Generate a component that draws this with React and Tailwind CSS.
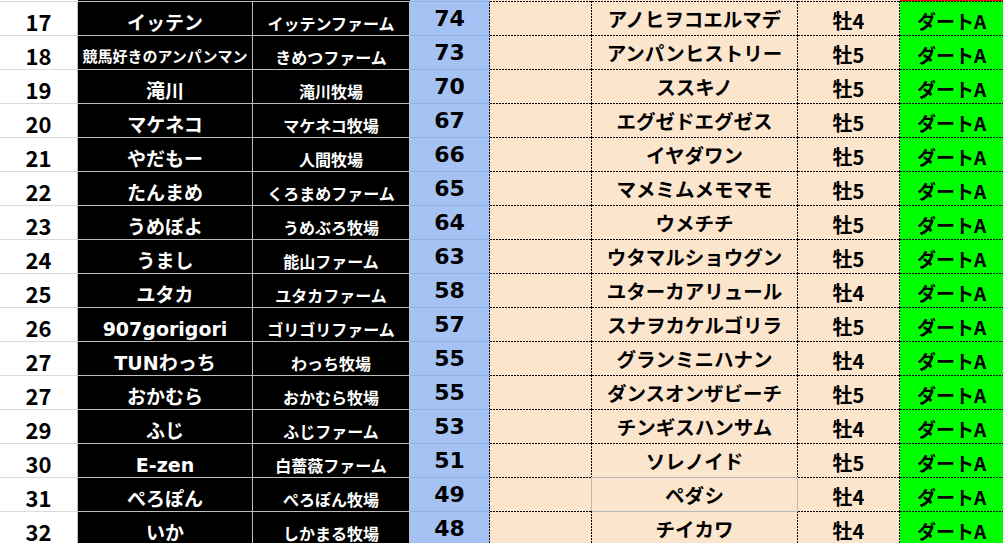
import React from "react";

const rows = [
  ["17", "イッテン", "イッテンファーム", "74", "アノヒヲコエルマデ", "牡4"],
  ["18", "競馬好きのアンパンマン", "きめつファーム", "73", "アンパンヒストリー", "牡5", true],
  ["19", "滝川", "滝川牧場", "70", "ススキノ", "牡5"],
  ["20", "マケネコ", "マケネコ牧場", "67", "エグゼドエグゼス", "牡5"],
  ["21", "やだもー", "人間牧場", "66", "イヤダワン", "牡5"],
  ["22", "たんまめ", "くろまめファーム", "65", "マメミムメモマモ", "牡5"],
  ["23", "うめぼよ", "うめぶろ牧場", "64", "ウメチチ", "牡5"],
  ["24", "うまし", "能山ファーム", "63", "ウタマルショウグン", "牡5"],
  ["25", "ユタカ", "ユタカファーム", "58", "ユターカアリュール", "牡4"],
  ["26", "907gorigori", "ゴリゴリファーム", "57", "スナヲカケルゴリラ", "牡5"],
  ["27", "TUNわっち", "わっち牧場", "55", "グランミニハナン", "牡4"],
  ["27", "おかむら", "おかむら牧場", "55", "ダンスオンザビーチ", "牡5"],
  ["29", "ふじ", "ふじファーム", "53", "チンギスハンサム", "牡4"],
  ["30", "E-zen", "白薔薇ファーム", "51", "ソレノイド", "牡5"],
  ["31", "ぺろぽん", "ぺろぽん牧場", "49", "ペダシ", "牡4"],
  ["32", "いか", "しかまる牧場", "48", "チイカワ", "牡4"],
];

const jp = "font-['Noto_Sans_CJK_JP',sans-serif]";
const mixed = "font-['DejaVu_Sans','Noto_Sans_CJK_JP',sans-serif]";

// dashed top + right lines drawn as repeating gradients (Excel-like 2px dash / 1px gap)
const dashTR =
  "bg-[image:repeating-linear-gradient(90deg,#000_0_2px,transparent_2px_3px),repeating-linear-gradient(180deg,#000_0_2px,transparent_2px_3px)] bg-[length:100%_1px,1px_100%] bg-[position:0_0,100%_0] bg-no-repeat bg-origin-border border-t border-r border-transparent";
const dashT =
  "bg-[image:repeating-linear-gradient(90deg,#000_0_2px,transparent_2px_3px)] bg-[length:100%_1px] bg-[position:0_0] bg-no-repeat bg-origin-border border-t border-transparent";
const dashR =
  "bg-[image:repeating-linear-gradient(180deg,#000_0_2px,transparent_2px_3px)] bg-[length:1px_100%] bg-[position:100%_0] bg-no-repeat bg-origin-border border-r border-r-transparent";
const dashTgrayR =
  "bg-[image:repeating-linear-gradient(90deg,#000_0_2px,transparent_2px_3px)] bg-[length:100%_1px] bg-[position:0_0] bg-no-repeat bg-origin-border border-t border-t-transparent border-r border-r-[#b7b7b7]";
const grayTdashR =
  "bg-[image:repeating-linear-gradient(180deg,#000_0_2px,transparent_2px_3px)] bg-[length:1px_100%] bg-[position:100%_0] bg-no-repeat bg-origin-border border-t border-t-[#b7b7b7] border-r border-r-transparent";

function Row({ r, idx }) {
  const [no, owner, farm, pt, horse, sex, small] = r;
  const ownerSize = small ? "text-[15px]" : "text-[19px]";
  let eCls = dashTR;
  let fCls = dashTR;
  if (idx === 14) {
    eCls = dashTgrayR;
    fCls = "border-t border-r border-[#b7b7b7]";
  } else if (idx === 15) {
    fCls = grayTdashR;
  }
  return (
    <div className="flex h-[34px]">
      <div className={`w-[78px] shrink-0 bg-white border-t border-r border-t-[#dadada] border-r-[#bdbdbd] flex items-center justify-center pt-[4px] ${jp} font-bold text-[22px] text-black leading-none`}>
        {no}
      </div>
      <div className={`w-[175px] shrink-0 bg-black border-t border-r border-[#bdbdbd] flex items-center justify-center pt-[9px] ${mixed} font-bold ${ownerSize} text-white leading-none whitespace-nowrap`}>
        {owner}
      </div>
      <div className={`w-[157px] shrink-0 bg-black border-t border-r border-[#bdbdbd] flex items-center justify-center pt-[8px] ${jp} font-bold text-[16px] text-white leading-none whitespace-nowrap`}>
        {farm}
      </div>
      <div className={`w-[80px] shrink-0 bg-[#a4c2f4] ${dashR} border-t border-t-[#92b0e4] flex items-center justify-center pt-[1px] font-['DejaVu_Sans',sans-serif] font-bold text-[22px] text-black leading-none`}>
        {pt}
      </div>
      <div className={`w-[102px] shrink-0 bg-[#fce5cd] ${eCls}`}></div>
      <div className={`w-[206px] shrink-0 bg-[#fce5cd] ${fCls} flex items-center justify-center pt-[1px] ${jp} font-bold text-[19.5px] text-black leading-none whitespace-nowrap`}>
        {horse}
      </div>
      <div className={`w-[102px] shrink-0 bg-[#fce5cd] ${dashTR} flex items-center justify-center pt-[4px] ${jp} font-bold text-[20px] text-black leading-none`}>
        {sex}
      </div>
      <div className={`w-[103px] shrink-0 bg-[#00ff00] ${dashT} flex items-center justify-center pt-[3px] ${jp} font-bold text-[19px] text-black leading-none`}>
        ダートA
      </div>
    </div>
  );
}

export default function App() {
  return (
    <div className="w-[1003px] h-[543px] overflow-hidden bg-white">
      <div className="flex h-[1px]">
        <div className="w-[78px] bg-white"></div>
        <div className="w-[332px] bg-black"></div>
        <div className="w-[80px] bg-[#a4c2f4]"></div>
        <div className="w-[410px] bg-[#fce5cd]"></div>
        <div className="w-[103px] bg-[#ff0000]"></div>
      </div>
      {rows.map((r, i) => (
        <Row key={i} r={r} idx={i} />
      ))}
    </div>
  );
}
